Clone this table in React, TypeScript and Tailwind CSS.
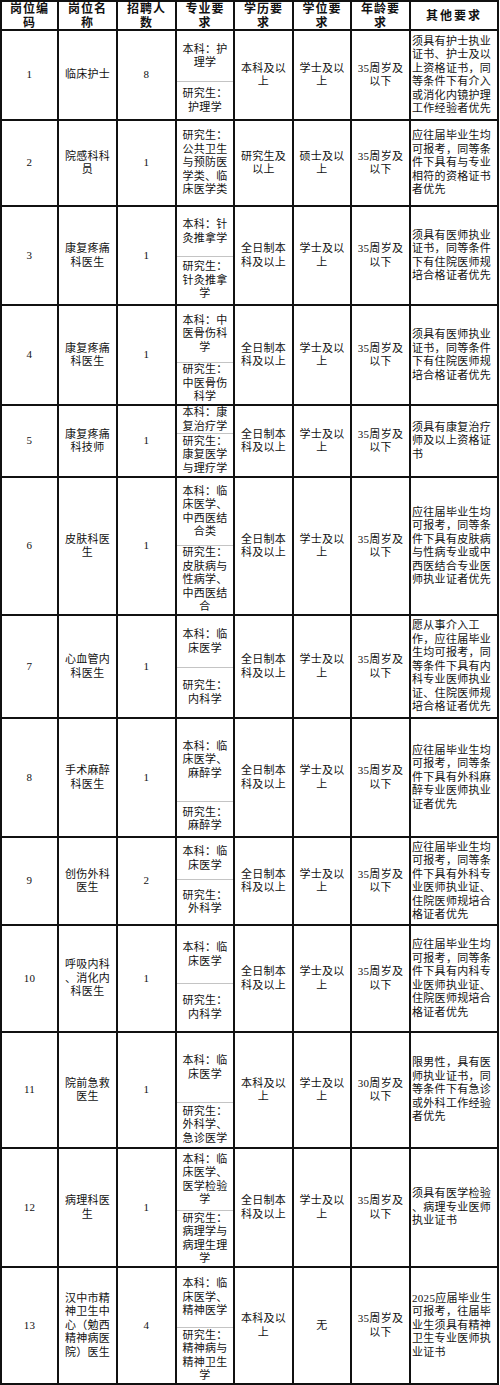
import React from "react";

type Row = {
  no: string;
  name: string[];
  count: string;
  top: string[];
  bottom?: string[];
  topH?: string;
  edu: string[];
  deg: string[];
  age: string[];
  other: string[];
};

const BK = ["本科及以", "上"];
const QR = ["全日制本", "科及以上"];
const XS = ["学士及以", "上"];
const A35 = ["35周岁及", "以下"];
const YS = ["须具有医师执业", "证书，同等条件", "下有住院医师规", "培合格证者优先"];

const rows: Row[] = [
  {
    no: "1", name: ["临床护士"], count: "8",
    top: ["本科：护", "理学"], bottom: ["研究生：", "护理学"], topH: "h-[51px]",
    edu: BK, deg: XS, age: A35,
    other: ["须具有护士执业", "证书、护士及以", "上资格证书，同", "等条件下有介入", "或消化内镜护理", "工作经验者优先"],
  },
  {
    no: "2", name: ["院感科科", "员"], count: "1",
    top: ["研究生：", "公共卫生", "与预防医", "学类、临", "床医学类"],
    edu: ["研究生及", "以上"], deg: ["硕士及以", "上"], age: A35,
    other: ["应往届毕业生均", "可报考，同等条", "件下具有与专业", "相符的资格证书", "者优先"],
  },
  {
    no: "3", name: ["康复疼痛", "科医生"], count: "1",
    top: ["本科：针", "灸推拿学"], bottom: ["研究生：", "针灸推拿", "学"], topH: "h-[50px]",
    edu: QR, deg: XS, age: A35, other: YS,
  },
  {
    no: "4", name: ["康复疼痛", "科医生"], count: "1",
    top: ["本科：中", "医骨伤科", "学"], bottom: ["研究生：", "中医骨伤", "科学"], topH: "h-[57px]",
    edu: QR, deg: XS, age: A35, other: YS,
  },
  {
    no: "5", name: ["康复疼痛", "科技师"], count: "1",
    top: ["本科：康", "复治疗学"], bottom: ["研究生：", "康复医学", "与理疗学"], topH: "h-[28px]",
    edu: QR, deg: XS, age: A35,
    other: ["须具有康复治疗", "师及以上资格证", "书"],
  },
  {
    no: "6", name: ["皮肤科医", "生"], count: "1",
    top: ["本科：临", "床医学、", "中西医结", "合类"], bottom: ["研究生：", "皮肤病与", "性病学、", "中西医结", "合"], topH: "h-[68px]",
    edu: QR, deg: XS, age: A35,
    other: ["应往届毕业生均", "可报考，同等条", "件下具有皮肤病", "与性病专业或中", "西医结合专业医", "师执业证者优先"],
  },
  {
    no: "7", name: ["心血管内", "科医生"], count: "1",
    top: ["本科：临", "床医学"], bottom: ["研究生：", "内科学"], topH: "h-[52px]",
    edu: QR, deg: XS, age: A35,
    other: ["愿从事介入工", "作，应往届毕业", "生均可报考，同", "等条件下具有内", "科专业医师执业", "证、住院医师规", "培合格证者优先"],
  },
  {
    no: "8", name: ["手术麻醉", "科医生"], count: "1",
    top: ["本科：临", "床医学、", "麻醉学"], bottom: ["研究生：", "麻醉学"], topH: "h-[83px]",
    edu: QR, deg: XS, age: A35,
    other: ["应往届毕业生均", "可报考，同等条", "件下具有外科麻", "醉专业医师执业", "证者优先"],
  },
  {
    no: "9", name: ["创伤外科", "医生"], count: "2",
    top: ["本科：临", "床医学"], bottom: ["研究生：", "外科学"], topH: "h-[42px]",
    edu: QR, deg: XS, age: A35,
    other: ["应往届毕业生均", "可报考，同等条", "件下具有外科专", "业医师执业证、", "住院医师规培合", "格证者优先"],
  },
  {
    no: "10", name: ["呼吸内科", "、消化内", "科医生"], count: "1",
    top: ["本科：临", "床医学"], bottom: ["研究生：", "内科学"], topH: "h-[58px]",
    edu: QR, deg: XS, age: A35,
    other: ["应往届毕业生均", "可报考，同等条", "件下具有内科专", "业医师执业证、", "住院医师规培合", "格证者优先"],
  },
  {
    no: "11", name: ["院前急救", "医生"], count: "1",
    top: ["本科：临", "床医学"], bottom: ["研究生：", "外科学、", "急诊医学"], topH: "h-[70px]",
    edu: BK, deg: XS, age: ["30周岁及", "以下"],
    other: ["限男性，具有医", "师执业证书，同", "等条件下有急诊", "或外科工作经验", "者优先"],
  },
  {
    no: "12", name: ["病理科医", "生"], count: "1",
    top: ["本科：临", "床医学、", "医学检验", "学"], bottom: ["研究生：", "病理学与", "病理生理", "学"], topH: "h-[62px]",
    edu: QR, deg: XS, age: A35,
    other: ["须具有医学检验", "、病理专业医师", "执业证书"],
  },
  {
    no: "13", name: ["汉中市精", "神卫生中", "心（勉西", "精神病医", "院）医生"], count: "4",
    top: ["本科：临", "床医学、", "精神医学"], bottom: ["研究生：", "精神病与", "精神卫生", "学"], topH: "h-[60px]",
    edu: BK, deg: ["无"], age: A35,
    other: ["2025应届毕业生", "可报考，往届毕", "业生须具有精神", "卫生专业医师执", "业证书"],
  },
];

const headers: string[][] = [
  ["岗位编", "码"],
  ["岗位名", "称"],
  ["招聘人", "数"],
  ["专业要", "求"],
  ["学历要", "求"],
  ["学位要", "求"],
  ["年龄要", "求"],
  ["其他要求"],
];

function Lines({ lines }: { lines: string[] }) {
  return (
    <div>
      {lines.map((l, i) => (
        <div key={i}>{l}</div>
      ))}
    </div>
  );
}

function Cell({ lines }: { lines: string[] }) {
  return (
    <div className="bg-white flex items-center justify-center text-center">
      <Lines lines={lines} />
    </div>
  );
}

export default function App() {
  return (
    <div className="w-[500px] h-[1385px] bg-white text-[#111] font-['Liberation_Serif','Noto_Sans_CJK_SC',serif] text-[11px] leading-[13.5px] tracking-[0.3px]">
      <div className="w-[499px] grid grid-cols-[55px_57px_57px_56px_57px_56px_57px_86px] grid-rows-[27px_88px_84px_97px_98px_70px_136px_101px_117px_86px_105px_114px_117px_115px] gap-[2px] bg-[#111] p-[2px]">
        {headers.map((h, i) => (
          <div
            key={i}
            className={
              "bg-white flex items-center justify-center text-center font-bold text-[12px] leading-[14px] " +
              (i === 7 ? "tracking-[2px]" : "tracking-[1px]")
            }
          >
            <Lines lines={h} />
          </div>
        ))}
        {rows.map((r) => (
          <React.Fragment key={r.no}>
            <Cell lines={[r.no]} />
            <Cell lines={r.name} />
            <Cell lines={[r.count]} />
            <div className="bg-white flex flex-col text-center">
              {r.bottom ? (
                <>
                  <div className={"flex items-center justify-center border-b border-[#c4c4c4] " + r.topH}>
                    <Lines lines={r.top} />
                  </div>
                  <div className="flex-1 flex items-center justify-center">
                    <Lines lines={r.bottom} />
                  </div>
                </>
              ) : (
                <div className="flex-1 flex items-center justify-center">
                  <Lines lines={r.top} />
                </div>
              )}
            </div>
            <Cell lines={r.edu} />
            <Cell lines={r.deg} />
            <Cell lines={r.age} />
            <div className="bg-white flex items-center pl-[1px] text-left">
              <Lines lines={r.other} />
            </div>
          </React.Fragment>
        ))}
      </div>
    </div>
  );
}
